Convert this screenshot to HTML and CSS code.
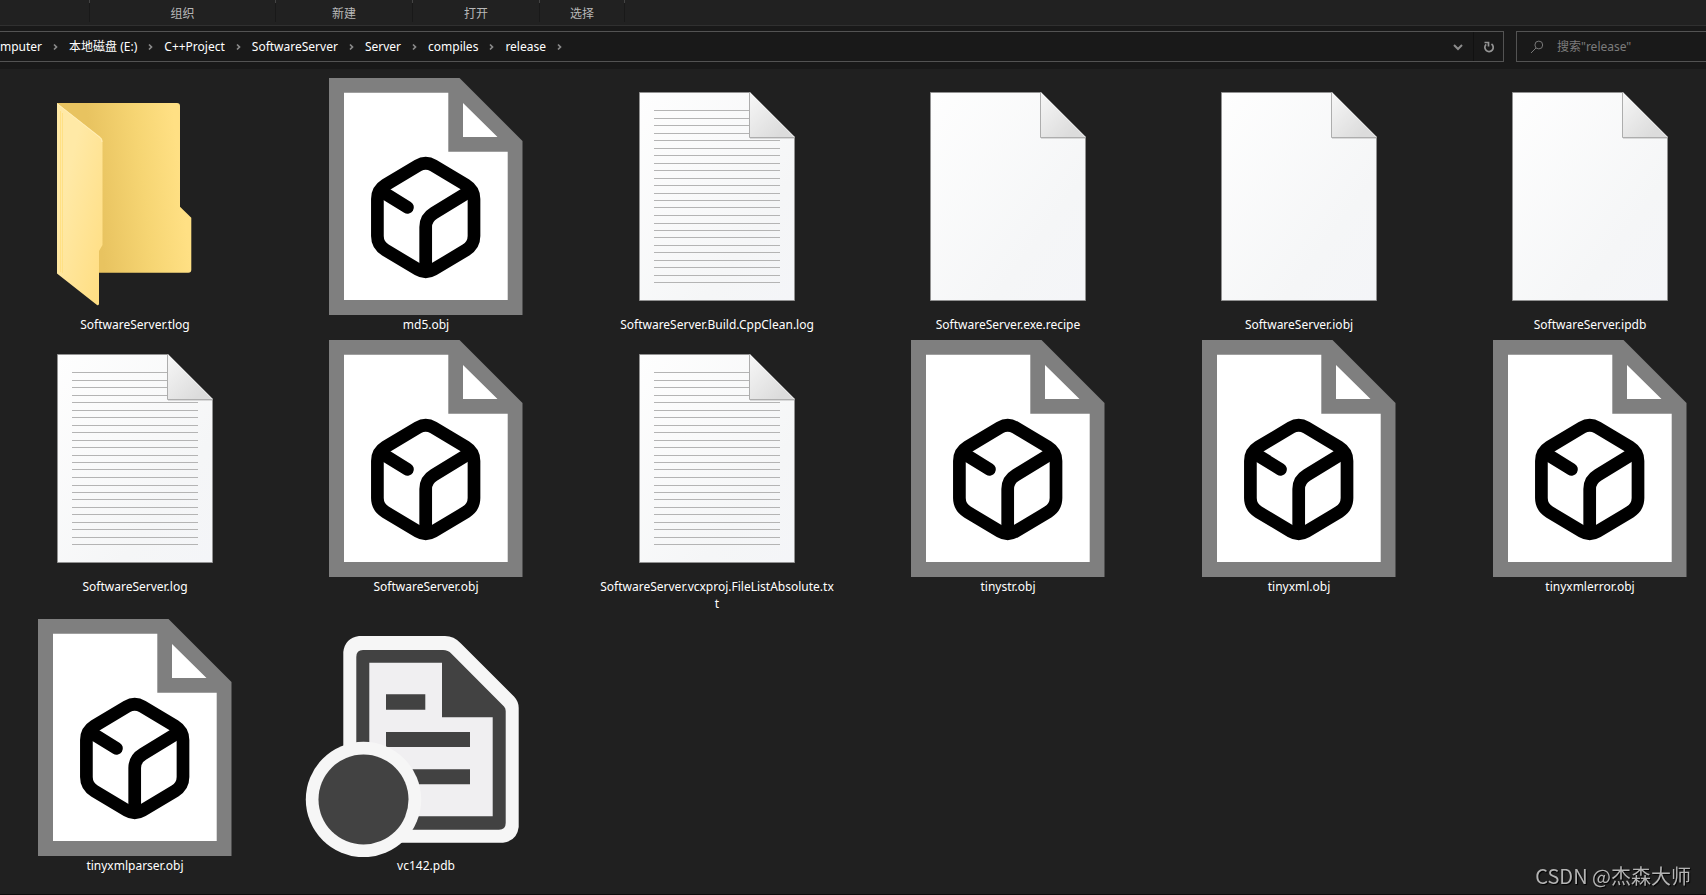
FILE: index.html
```html
<!DOCTYPE html>
<html lang="zh-CN">
<head>
<meta charset="utf-8">
<title>release</title>
<link rel="stylesheet" href="styles.css">
</head>
<body>
<svg class="sprite" aria-hidden="true">
  <defs>
    <linearGradient id="folder-back" x1="0.3" y1="0.6" x2="1" y2="0.5">
      <stop offset="0" stop-color="#e8c360"/><stop offset="0.5" stop-color="#f6d573"/><stop offset="0.9" stop-color="#ffe084"/>
    </linearGradient>
    <linearGradient id="folder-front" x1="0" y1="0" x2="1" y2="1">
      <stop offset="0.3" stop-color="#ffe9a6"/><stop offset="1" stop-color="#ffdd80"/>
    </linearGradient>
    <linearGradient id="paper" x1="0" y1="0" x2="1" y2="1">
      <stop offset="0" stop-color="#fefefe"/><stop offset="0.7" stop-color="#f5f6f7"/><stop offset="1" stop-color="#f4f5f8"/>
    </linearGradient>
    <linearGradient id="fold" x1="0" y1="0" x2="1" y2="1">
      <stop offset="0.1" stop-color="#f4f4f4"/><stop offset="0.8" stop-color="#dcdcdc"/>
    </linearGradient>
    <symbol id="i-folder" viewBox="0 0 256 240">
      <path fill="url(#folder-back)" d="M50 27H170Q173 27 173 30V130.700L184.300 141.700V193.700Q184.300 196.700 181.300 196.700H50Z"/>
      <path fill="url(#folder-front)" d="M50 27L93.500 61Q95.500 62.500 95.500 65V169L92 175V227.500Q92 230 90 229L50 197.500Z"/>
      <path fill="none" stroke="#ffe084" d="M53.500 35V196M55.500 37V197"/>
      <path fill="none" stroke="#ffeeb8" d="M50.500 28L93 61.500Q95 63 95 66"/>
    </symbol>
    <symbol id="i-doc" viewBox="0 0 256 240">
      <path fill="url(#paper)" stroke="#929292" d="M50.500 16.500H161.500L205.500 60.500V224.500H50.500Z"/>
      <path stroke="#000" stroke-opacity="0.12" d="M161 62.500H205"/>
      <path fill="url(#fold)" stroke="#adadad" d="M160.500 16.500V61.500H205.500"/>
      <path fill="none" stroke="#777" d="M161.500 16.500L205.500 60.500"/>
    </symbol>
    <symbol id="i-text" viewBox="0 0 256 240">
      <use href="#i-doc" width="256" height="240"/>
      <path stroke="#b4b4b4" d="M65 34.500H160M65 42.500H160M65 49.500H160M65 57.500H160M65 64.500H191M65 72.500H191M65 79.500H191M65 87.500H191M65 94.500H191M65 102.500H191M65 109.500H191M65 117.500H191M65 124.500H191M65 131.500H191M65 139.500H191M65 147.500H191M65 154.500H191M65 161.500H191M65 169.500H191M65 176.500H191M65 184.500H191M65 191.500H191M65 199.500H191M65 206.500H191"/>
    </symbol>
    <symbol id="i-obj" viewBox="0 0 256 240">
      <path fill="#7f7f7f" d="M31 2H161.500L224.500 65V239H31Z"/>
      <path fill="#fff" d="M46 16.700H150.300V75.700H209.700V224H46ZM165 27V61H199.500Z"/>
      <g fill="none" stroke="#000" stroke-width="12.700">
        <path d="M120 89.500Q127.700 85 135.400 89.500L168 109Q176 114 176 123V160Q176 169 168 174L135.400 193.500Q127.700 198 120 193.500L87.400 174Q79.400 169 79.400 160V123Q79.400 114 87.400 109Z"/>
        <path d="M172 115L136 137Q127.700 142 127.700 151V195"/>
        <path stroke-linecap="round" d="M83 115L109.500 131.300"/>
      </g>
    </symbol>
    <symbol id="i-pdb" viewBox="0 0 256 240">
      <path fill="#f6f6f6" d="M61 19H147Q156 19 162.700 26.300L216 79.500Q220.700 84.500 220.700 91V210Q219 224 205 225.700H45.300V35Q47 21 61 19Z"/>
      <path fill="#424242" d="M65 33H145Q150 33 153.500 36.700L206 89.500Q207.700 91 207.700 94V206Q207.700 212.700 201 212.700H58.300V40Q58.300 33 65 33Z"/>
      <path fill="#f0eff1" d="M71.300 45.700H144V100.300H194.700V199.300H71.300Z"/>
      <path fill="#424242" d="M88 77.300H127.300V92.700H88ZM88 115H172V130H88ZM88 152.300H172V167.300H88Z"/>
      <circle cx="65.500" cy="182.500" r="57.700" fill="#f6f6f6"/>
      <circle cx="65.500" cy="182.500" r="45" fill="#424242"/>
    </symbol>
    <symbol id="i-sep" viewBox="0 0 8 8"><path fill="none" stroke="#8a8a8a" stroke-width="1.700" d="M2.500 1.500L5 4L2.500 6.500"/></symbol>
  </defs>
</svg>

<header class="ribbon">
  <div class="group group-first"></div>
  <div class="group group-organize">组织</div>
  <div class="group group-new">新建</div>
  <div class="group group-open">打开</div>
  <div class="group group-select">选择</div>
</header>

<div class="toolbar">
  <nav class="address" aria-label="路径">
    <div class="crumbs">
      <button class="crumb">mputer</button>
      <svg class="sep"><use href="#i-sep"/></svg>
      <button class="crumb">本地磁盘 (E:)</button>
      <svg class="sep"><use href="#i-sep"/></svg>
      <button class="crumb">C++Project</button>
      <svg class="sep"><use href="#i-sep"/></svg>
      <button class="crumb">SoftwareServer</button>
      <svg class="sep"><use href="#i-sep"/></svg>
      <button class="crumb">Server</button>
      <svg class="sep"><use href="#i-sep"/></svg>
      <button class="crumb">compiles</button>
      <svg class="sep"><use href="#i-sep"/></svg>
      <button class="crumb">release</button>
      <svg class="sep"><use href="#i-sep"/></svg>
    </div>
    <button class="tool" aria-label="历史记录">
      <svg width="12" height="12" viewBox="0 0 12 12"><path fill="none" stroke="#8c8c8c" stroke-width="2" d="M2 4L6 8L10 4"/></svg>
    </button>
    <button class="tool tool-refresh" aria-label="刷新">
      <svg width="12" height="12" viewBox="0 0 12 12"><path fill="none" stroke="#949494" stroke-width="1.700" d="M8.500 3A4.200 4.200 0 1 1 3.200 3.300M1.500 1.500H5.500V5.500"/></svg>
    </button>
  </nav>
  <label class="search">
    <svg width="14" height="14" viewBox="0 0 14 14"><circle cx="8.800" cy="5" r="3.900" fill="none" stroke="#777"/><path stroke="#777" d="M6 8L1 13"/></svg>
    <input class="search-input" type="text" placeholder='搜索"release"' aria-label="搜索">
  </label>
</div>

<main class="content">
  <ul class="files">
    <li class="file"><svg class="icon"><use href="#i-folder"/></svg><span class="name">SoftwareServer.tlog</span></li>
    <li class="file"><svg class="icon"><use href="#i-obj"/></svg><span class="name">md5.obj</span></li>
    <li class="file"><svg class="icon"><use href="#i-text"/></svg><span class="name">SoftwareServer.Build.CppClean.log</span></li>
    <li class="file"><svg class="icon"><use href="#i-doc"/></svg><span class="name">SoftwareServer.exe.recipe</span></li>
    <li class="file"><svg class="icon"><use href="#i-doc"/></svg><span class="name">SoftwareServer.iobj</span></li>
    <li class="file"><svg class="icon"><use href="#i-doc"/></svg><span class="name">SoftwareServer.ipdb</span></li>
    <li class="file"><svg class="icon"><use href="#i-text"/></svg><span class="name">SoftwareServer.log</span></li>
    <li class="file"><svg class="icon"><use href="#i-obj"/></svg><span class="name">SoftwareServer.obj</span></li>
    <li class="file"><svg class="icon"><use href="#i-text"/></svg><span class="name">SoftwareServer.vcxproj.FileListAbsolute.txt</span></li>
    <li class="file"><svg class="icon"><use href="#i-obj"/></svg><span class="name">tinystr.obj</span></li>
    <li class="file"><svg class="icon"><use href="#i-obj"/></svg><span class="name">tinyxml.obj</span></li>
    <li class="file"><svg class="icon"><use href="#i-obj"/></svg><span class="name">tinyxmlerror.obj</span></li>
    <li class="file"><svg class="icon"><use href="#i-obj"/></svg><span class="name">tinyxmlparser.obj</span></li>
    <li class="file"><svg class="icon"><use href="#i-pdb"/></svg><span class="name">vc142.pdb</span></li>
  </ul>
</main>
<div class="watermark">CSDN @杰森大师</div>
</body>
</html>
```
FILE: styles.css
```css
* { box-sizing: border-box; }
body {
  margin: 0;
  min-height: 100vh;
  display: flex;
  flex-direction: column;
  background: #202020;
  color: #fff;
  font: 12px/17px "Noto Sans", "Noto Sans CJK SC", sans-serif;
  overflow: hidden;
}
button, input { font: inherit; color: inherit; background: none; border: 0; padding: 0; margin: 0; }
.sprite { position: absolute; width: 0; height: 0; }

.ribbon {
  display: flex;
  height: 26px;
  padding-bottom: 3px;
  border-bottom: 1px solid #303030;
  background: #212121;
}
.group {
  padding-top: 5px;
  text-align: center;
  color: #b8b8b8;
  border-right: 1px solid;
  border-image: linear-gradient(#444 4px, #191919 4px) 1;
}
.group-first { width: 90px; }
.group-organize { width: 186px; }
.group-new { width: 137px; }
.group-open { width: 127px; }
.group-select { width: 85px; }

.toolbar {
  display: flex;
  gap: 12px;
  padding: 5px 0 7px;
  background: #191919;
}
.address {
  flex: 1;
  display: flex;
  height: 31px;
  border: 1px solid #535353;
  border-left: 0;
}
.crumbs { flex: 1; display: flex; align-items: center; gap: 9px; }
.crumb { white-space: nowrap; }
.sep { width: 9px; height: 8px; }
.tool { display: flex; align-items: center; justify-content: center; width: 30px; }
.tool-refresh { border-left: 1px solid #111; }
.search {
  display: flex;
  align-items: center;
  gap: 13px;
  width: 190px;
  padding-left: 13px;
  border: 1px solid #535353;
  border-right: 0;
}
.search-input { flex: 1; min-width: 0; outline: 0; }
.search-input::placeholder { color: #7c7c7c; opacity: 1; }

.content { flex: 1; padding-top: 7px; border-bottom: 1px solid #0c0c0c; }
.files {
  display: grid;
  grid-template-columns: repeat(6, minmax(0, 1fr));
  gap: 5px 35px;
  margin: 0 -12px 0 0;
  padding: 0 0 0 7px;
  list-style: none;
}
.file { display: flex; flex-direction: column; align-items: center; }
.icon { width: 256px; height: 240px; }
.name { max-width: 236px; text-align: center; word-break: break-all; }

.watermark {
  position: fixed;
  right: 15px;
  bottom: 4px;
  font: 20px/30px "Noto Sans CJK SC", sans-serif;
  color: #b4b4b4;
  text-shadow: 1px 1px 1px #000;
}
```
